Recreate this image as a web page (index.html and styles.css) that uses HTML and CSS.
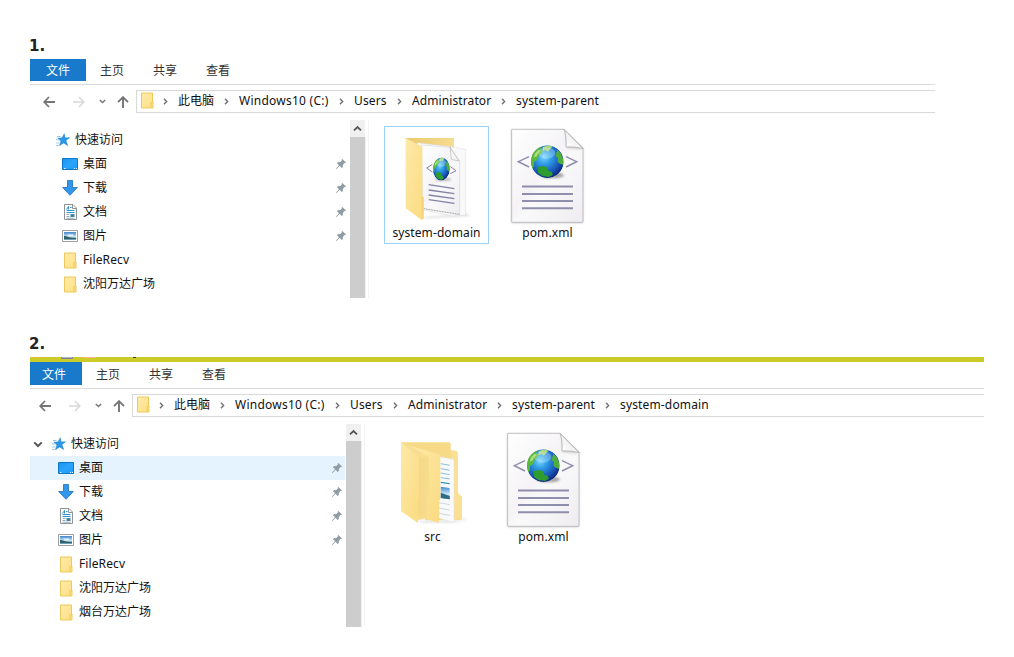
FILE: index.html
```
<!DOCTYPE html>
<html lang="zh-CN">
<head>
<meta charset="utf-8">
<title>system-parent</title>
<link rel="stylesheet" href="styles.css">
</head>
<body>
<svg class="defs" width="0" height="0">
  <defs>
    <linearGradient id="gFold" x1="0" y1="0" x2="1" y2="1"><stop offset="0" stop-color="#ffeaa8"/><stop offset="1" stop-color="#ffe085"/></linearGradient>
    <linearGradient id="gFlap" x1="0" y1="0" x2="1" y2="1"><stop offset="0" stop-color="#fde9a8"/><stop offset="1" stop-color="#fbdb80"/></linearGradient>
    <linearGradient id="gFlapShade" x1="0" y1="0" x2="1" y2="0"><stop offset="0" stop-color="#f3d47e"/><stop offset="1" stop-color="#f8dd90"/></linearGradient>
    <linearGradient id="gBack" x1="0" y1="0" x2="1" y2="0"><stop offset="0" stop-color="#e9c96c"/><stop offset="1" stop-color="#f7dd92"/></linearGradient>
    <linearGradient id="gPage" x1="0" y1="0" x2="1" y2="1"><stop offset="0" stop-color="#fff"/><stop offset=".45" stop-color="#f5f3f6"/><stop offset=".55" stop-color="#faf9fa"/><stop offset="1" stop-color="#eeecf0"/></linearGradient>
    <linearGradient id="gCurl" x1="0" y1="1" x2="1" y2="0"><stop offset="0" stop-color="#fff"/><stop offset=".5" stop-color="#f2f2f2"/><stop offset="1" stop-color="#c4c4c4"/></linearGradient>
    <radialGradient id="gSea" cx=".4" cy=".36" r=".65"><stop offset="0" stop-color="#79d4fa"/><stop offset=".35" stop-color="#2e9be6"/><stop offset=".75" stop-color="#1858b8"/><stop offset="1" stop-color="#0d2a80"/></radialGradient>
    <linearGradient id="gSky" x1="0" y1="0" x2="0" y2="1"><stop offset="0" stop-color="#3f86cf"/><stop offset=".6" stop-color="#cfe8f8"/><stop offset="1" stop-color="#5d92a8"/></linearGradient>
    <linearGradient id="gDesk" x1="0" y1="0" x2="1" y2="1"><stop offset="0" stop-color="#1593f0"/><stop offset=".5" stop-color="#2ba4fa"/><stop offset="1" stop-color="#1c9cf8"/></linearGradient>
    <clipPath id="cGlobe"><circle cx="0" cy="0" r="49"/></clipPath>
    <filter id="soft" x="-30%" y="-50%" width="160%" height="200%"><feGaussianBlur stdDeviation="3"/></filter>
  </defs>

  <symbol id="i-back" viewBox="0 0 12 12"><path d="M6 1L1.2 6 6 11M1.5 6H12" fill="none" stroke="currentColor" stroke-width="1.8"/></symbol>
  <symbol id="i-fwd" viewBox="0 0 12 12"><path d="M6 1l4.800 5L6 11M10.500 6H0" fill="none" stroke="currentColor" stroke-width="1.6"/></symbol>
  <symbol id="i-up" viewBox="0 0 12 12"><path d="M1 6.200L6 1.200l5 5M6 1.500V12" fill="none" stroke="currentColor" stroke-width="1.9"/></symbol>
  <symbol id="i-down" viewBox="0 0 7 5"><path d="M.8 1l2.700 2.600L6.200 1" fill="none" stroke="currentColor" stroke-width="1.4"/></symbol>
  <symbol id="i-right" viewBox="0 0 5 7"><path d="M1 .8l2.600 2.700L1 6.200" fill="none" stroke="currentColor" stroke-width="1.4"/></symbol>

  <symbol id="i-folder" viewBox="0 0 14 17"><path d="M1.500 1h11v9h.5v6h-11.500z" fill="url(#gFold)" stroke="#ecc95a"/><path d="M11 15.500V10.500h2" fill="none" stroke="#ecc95a"/></symbol>
  <symbol id="i-star" viewBox="0 0 14 14"><path d="M8.300 .8l.7 4.100 4.500-.2-3.600 2.900 1.800 4.900-4-2.600-4.200 2.700 1.500-4.500L1.800 5.200l4.200-.3z" fill="#2899e8" stroke="#1679c9" stroke-width=".5"/><path d="M1 3.500h3.500M0 6.800h3.500M.3 10h3M0 12.500h2.500" stroke="#8ac5ef" stroke-width=".9"/></symbol>
  <symbol id="i-desktop" viewBox="0 0 16 12"><path d="M.5.500h15v11H.5z" fill="url(#gDesk)" stroke="#0c78cc"/><path d="M2 10.500h1.500M12 10.500h1M14 10.500h1" stroke="#e8f6ff" stroke-width="1"/></symbol>
  <symbol id="i-download" viewBox="0 0 16 16"><path d="M5.500.500h5v7h4.800L8 15.300.7 7.500h4.800z" fill="#3296ea" stroke="#2678c4" stroke-width=".9"/></symbol>
  <symbol id="i-doc" viewBox="0 0 13 16"><path d="M.5.500h8.500l3.500 3.500v11.500H.5z" fill="#fff" stroke="#8f9296"/><path d="M8.500 .5V4.500h4" fill="none" stroke="#8f9296"/><path d="M2.500 5.500L4.500 2.500v3M6 3.500h1.500M2.500 6.500h8M2.500 8.500h8" fill="none" stroke="#2a94cc"/><path d="M2.500 10.500h3M2.500 12.500h3M2.500 14.200h8" stroke="#8fa3b0" stroke-width=".9"/><path d="M6.500 10h4v3h-4z" fill="#3f86a0"/></symbol>
  <symbol id="i-pic" viewBox="0 0 16 12"><path d="M.5.500h15v11H.5z" fill="#fff" stroke="#a0a0a0"/><path d="M2 2h12v8H2z" fill="url(#gSky)"/><path d="M2 6c3 0 5 2 12 1.800V9H2z" fill="#315f68"/><path d="M5 4.500h6v1.500H7z" fill="#e6f5fb"/></symbol>
  <symbol id="i-pin" viewBox="0 0 10 10"><path d="M6.300 0L10 3.600l-1 .7-.6-.2-1.600 1.800.1 2-1.100 1L3.600 6.800.6 10 0 9.400l3-3.100L1 4.200l1-1.100 2 .1 1.900-1.700-.3-.8z" fill="#8f9ca3"/></symbol>

  <symbol id="globe" viewBox="-52 -52 104 104"><g clip-path="url(#cGlobe)"><circle r="49" fill="url(#gSea)"/><path d="M-49 6c-3-20 3-36 16-46l14-6-2 10 8 2-3 9-10 8-5 12-9 6-1 14-5 6z" fill="#58b93b"/><path d="M-14-44l18-5 12 4-8 7-6 8-8-5-8 4z" fill="#a5d57a"/><path d="M30-36l10 10 8 18-1 17-9-3-8-6 2-10-7-6 2-10z" fill="#4fae3b"/><path d="M-29 16l15-3 13 4 4 10 11 4 2 9-12 6-20-4-12-9z" fill="#2f9c30"/><path d="M-38-24l12-12 4 3-7 10-2 7-9 4z" fill="#b0dd74"/><ellipse cx="-2" cy="-26" rx="26" ry="17" fill="#e8fcff" opacity=".28"/></g></symbol>

  <symbol id="big-xml" viewBox="30 21 225 294">
    <path d="M34 30h157l58 55v224H34z" fill="#888" opacity=".5" filter="url(#soft)"/>
    <path d="M35 28h157l57 56v221q0 2-2 2H37q-2 0-2-2z" fill="url(#gPage)" stroke="#b8b8bc" stroke-width="2.500"/>
    <path d="M196 38l4 47 46 4z" fill="#999" opacity=".4" filter="url(#soft)"/>
    <path d="M192 28q8 20 6 53 28-2 51 5z" fill="url(#gCurl)" stroke="#b0b0b0" stroke-width="2.500"/>
    <path d="M87 110l-32 15 32 16M198 110l32 15-32 16" fill="none" stroke="#8f8eac" stroke-width="4.500"/>
    <ellipse cx="157" cy="166" rx="35" ry="9" fill="#555" opacity=".5" filter="url(#soft)"/>
    <use href="#globe" x="90" y="73" width="104" height="104"/>
    <path d="M66 199.500h153M66 222h153M66 243h153M66 264.500h153" stroke="#8f8eac" stroke-width="6"/>
  </symbol>

  <symbol id="big-folder-xml" viewBox="57 21 225 294">
    <path d="M125 292l132-12 16 8-130 7z" fill="#999" opacity=".3" filter="url(#soft)"/>
    <path d="M77 54h145v190H110z" fill="url(#gBack)"/>
    <path d="M112 68l102 12 43 8v198l-40 2-105-22z" fill="#f9f9fa" stroke="#d6d6d8" stroke-width="1.500"/>
    <path d="M124 75l86 7 29 40v163l-110-20z" fill="url(#gPage)" stroke="#cecece" stroke-width="1.500"/>
    <path d="M130 266l110 17" fill="none" stroke="#888" stroke-width="2" stroke-dasharray="5 3"/>
    <path d="M210 81l4 37 23 5z" fill="url(#gCurl)" stroke="#b4b4b4" stroke-width="2"/>
    <path d="M157 133l-17 11 17 12M211 140l17 12-17 9" fill="none" stroke="#8382a4" stroke-width="3"/>
    <ellipse cx="190" cy="178" rx="24" ry="5" fill="#555" opacity=".4" filter="url(#soft)"/>
    <g transform="translate(184 147) rotate(3) scale(.52 .71)"><use href="#globe" x="-52" y="-52" width="104" height="104"/></g>
    <path d="M146 194l77 12M146 210l77 11M146 225l77 11M146 239l77 11" stroke="#8382a4" stroke-width="4"/>
    <path d="M77 54l50 26v148l4 5v62l-6 5-48-35z" fill="url(#gFlap)"/>
    <path d="M127 228l4 5v62l-6 5v-68z" fill="#f4d37a"/>
  </symbol>

  <symbol id="big-folder-src" viewBox="30 3 225 294">
    <path d="M100 270h130l12-8v8l-40 8H110z" fill="#999" opacity=".25" filter="url(#soft)"/>
    <path d="M48 37h143q6 0 6 6v18l14 1q7 1 7 8v119l13 12v67l-6 2H100z" fill="#f6da88"/>
    <path d="M198 61l12 1q8 1 8 8v120l13 11v66l-26 2z" fill="#fbe093"/>
    <path d="M162 80l45 8v190l-45-13z" fill="#f8f9fa" stroke="#dcdcdc" stroke-width="1.500"/>
    <path d="M167 101l27 5M167 116l27 5M167 129l27 5M167 143l27 4" stroke="#88c1de" stroke-width="3"/>
    <path d="M167 157l27 4" stroke="#3294c6" stroke-width="4"/>
    <path d="M167 170l27 4v34l-27-4z" fill="url(#gSky)"/>
    <path d="M167 188l27 10v10l-27-4z" fill="#2b6d86"/>
    <path d="M162 218l32 6M162 234l32 6M162 250l32 6" stroke="#d0d4d8" stroke-width="3"/>
    <path d="M98 271l22-6v9l-22 4z" fill="#f5f5f5"/>
    <path d="M76 47l90 27v133l-5 6v66l-64-21z" fill="url(#gFlap)"/>
    <path d="M76 47l56 36v116l-6 8v58l-29-7z" fill="url(#gFlapShade)"/>
    <path d="M48 37l54 44v122l-3 8v68l-51-35z" fill="url(#gFlap)"/>
    <path d="M48 37l28 10 56 36-30-2z" fill="#f9dd90"/>
  </symbol>
</svg>

<main class="page">
  <h2 class="step">1.</h2>
  <section class="explorer explorer-parent">
    <div class="window">
      <nav class="ribbon"><span class="tab file">文件</span><span class="tab">主页</span><span class="tab">共享</span><span class="tab">查看</span></nav>
      <div class="toolbar">
        <div class="nav">
          <svg class="back"><use href="#i-back"/></svg><svg class="fwd"><use href="#i-fwd"/></svg><svg class="recent"><use href="#i-down"/></svg><svg class="up"><use href="#i-up"/></svg>
        </div>
        <div class="address">
          <span class="crumb root"><svg class="folder"><use href="#i-folder"/></svg><svg class="sep"><use href="#i-right"/></svg></span>
          <span class="crumb pc">此电脑<svg class="sep"><use href="#i-right"/></svg></span>
          <span class="crumb drive">Windows10 (C:)<svg class="sep"><use href="#i-right"/></svg></span>
          <span class="crumb users">Users<svg class="sep"><use href="#i-right"/></svg></span>
          <span class="crumb admin">Administrator<svg class="sep"><use href="#i-right"/></svg></span>
          <span class="crumb parent">system-parent</span>
        </div>
      </div>
      <div class="content">
        <aside class="tree">
          <div class="row quick"><svg class="star"><use href="#i-star"/></svg>快速访问</div>
          <div class="row"><span class="ico"><svg class="wide"><use href="#i-desktop"/></svg></span>桌面<svg class="pin"><use href="#i-pin"/></svg></div>
          <div class="row"><span class="ico"><svg class="square"><use href="#i-download"/></svg></span>下载<svg class="pin"><use href="#i-pin"/></svg></div>
          <div class="row"><span class="ico"><svg class="tall"><use href="#i-doc"/></svg></span>文档<svg class="pin"><use href="#i-pin"/></svg></div>
          <div class="row"><span class="ico"><svg class="wide"><use href="#i-pic"/></svg></span>图片<svg class="pin"><use href="#i-pin"/></svg></div>
          <div class="row latin"><span class="ico"><svg class="folder"><use href="#i-folder"/></svg></span>FileRecv</div>
          <div class="row"><span class="ico"><svg class="folder"><use href="#i-folder"/></svg></span>沈阳万达广场</div>
        </aside>
        <div class="scroll"><div class="arrow"><svg><use href="#i-down"/></svg></div><div class="thumb"></div></div>
        <div class="files">
          <figure class="tile selected"><svg><use href="#big-folder-xml"/></svg><figcaption>system-domain</figcaption></figure>
          <figure class="tile"><svg><use href="#big-xml"/></svg><figcaption>pom.xml</figcaption></figure>
        </div>
      </div>
    </div>
  </section>

  <h2 class="step">2.</h2>
  <section class="explorer explorer-domain">
    <svg class="strip" viewBox="0 0 954 5"><path d="M0 0h954v5H0z" fill="#cccc29"/><path d="M0 0h11v.6H0z" fill="#f0b04c"/><path d="M31.500 0h11v1.500h-11z" fill="#e9e9f4" stroke="#7f7f9c"/><path d="M53 0h13v1H53z" fill="#f6b58a"/><path d="M103 0h3v1h-3z" fill="#333"/></svg>
    <div class="window">
      <nav class="ribbon"><span class="tab file">文件</span><span class="tab">主页</span><span class="tab">共享</span><span class="tab">查看</span></nav>
      <div class="toolbar">
        <div class="nav">
          <svg class="back"><use href="#i-back"/></svg><svg class="fwd"><use href="#i-fwd"/></svg><svg class="recent"><use href="#i-down"/></svg><svg class="up"><use href="#i-up"/></svg>
        </div>
        <div class="address">
          <span class="crumb root"><svg class="folder"><use href="#i-folder"/></svg><svg class="sep"><use href="#i-right"/></svg></span>
          <span class="crumb pc">此电脑<svg class="sep"><use href="#i-right"/></svg></span>
          <span class="crumb drive">Windows10 (C:)<svg class="sep"><use href="#i-right"/></svg></span>
          <span class="crumb users">Users<svg class="sep"><use href="#i-right"/></svg></span>
          <span class="crumb admin">Administrator<svg class="sep"><use href="#i-right"/></svg></span>
          <span class="crumb parent">system-parent<svg class="sep"><use href="#i-right"/></svg></span>
          <span class="crumb domain">system-domain</span>
        </div>
      </div>
      <div class="content">
        <aside class="tree">
          <div class="row quick"><svg class="expand"><use href="#i-down"/></svg><svg class="star"><use href="#i-star"/></svg>快速访问</div>
          <div class="row active"><span class="ico"><svg class="wide"><use href="#i-desktop"/></svg></span>桌面<svg class="pin"><use href="#i-pin"/></svg></div>
          <div class="row"><span class="ico"><svg class="square"><use href="#i-download"/></svg></span>下载<svg class="pin"><use href="#i-pin"/></svg></div>
          <div class="row"><span class="ico"><svg class="tall"><use href="#i-doc"/></svg></span>文档<svg class="pin"><use href="#i-pin"/></svg></div>
          <div class="row"><span class="ico"><svg class="wide"><use href="#i-pic"/></svg></span>图片<svg class="pin"><use href="#i-pin"/></svg></div>
          <div class="row latin"><span class="ico"><svg class="folder"><use href="#i-folder"/></svg></span>FileRecv</div>
          <div class="row"><span class="ico"><svg class="folder"><use href="#i-folder"/></svg></span>沈阳万达广场</div>
          <div class="row"><span class="ico"><svg class="folder"><use href="#i-folder"/></svg></span>烟台万达广场</div>
        </aside>
        <div class="scroll"><div class="arrow"><svg><use href="#i-down"/></svg></div><div class="thumb"></div></div>
        <div class="files">
          <figure class="tile"><svg><use href="#big-folder-src"/></svg><figcaption>src</figcaption></figure>
          <figure class="tile"><svg><use href="#big-xml"/></svg><figcaption>pom.xml</figcaption></figure>
        </div>
      </div>
    </div>
  </section>
</main>
</body>
</html>
```
FILE: styles.css
```
* { box-sizing: border-box; }
body { margin: 0; background: #fff; color: #111; font: 12px/16px "Noto Sans", "Noto Sans CJK SC", sans-serif; }
svg { display: block; flex: none; }
.defs { position: absolute; }
.page { padding: 0 30px; }
.step { margin: 0; height: 59px; padding: 36px 0 0; font: bold 15px/20px "DejaVu Sans", sans-serif; color: #222; text-indent: -1px; }
.explorer { overflow: hidden; }
.explorer-parent { width: 905px; height: 239px; }
.explorer-domain { width: 954px; height: 270px; }
.strip { width: 954px; height: 5px; }

.window { display: flex; flex-direction: column; height: 239px; }
.explorer-domain .window { height: 265px; margin-left: -4px; padding-top: 1px; }

.ribbon { display: flex; height: 26px; border-bottom: 1px solid #dadbdc; color: #333; }
.tab { width: 53px; height: 22px; padding-left: 14px; line-height: 24px; }
.tab.file { width: 56px; padding-left: 16px; background: #1979ca; color: #fff; }
.explorer-domain .file { height: 23px; margin-top: -1px; padding-top: 1px; }

.toolbar { display: flex; height: 23px; margin-top: 5px; flex: none; }
.nav { display: flex; align-items: center; width: 106px; padding-left: 13px; color: #757575; }
.back, .fwd, .up { width: 12px; height: 12px; }
.fwd { margin-left: 18px; color: #d9d9d9; }
.recent { width: 7px; height: 5px; margin-left: 14px; }
.up { margin-left: 11px; }
.address { flex: 1; display: flex; border: 1px solid #d9d9d9; border-right: 0; }
.crumb { display: flex; align-items: center; justify-content: space-between; height: 20px; white-space: nowrap; }
.sep { width: 5px; height: 7px; margin-right: 10px; color: #707070; }
.root { width: 41px; padding-left: 3px; }
.root .folder { margin-top: -2px; }
.pc { width: 61px; }
.drive { width: 115px; letter-spacing: .25px; }
.users { width: 58px; letter-spacing: .15px; }
.admin { width: 104px; letter-spacing: .1px; }
.parent { width: 108px; letter-spacing: .15px; }
.domain { letter-spacing: .15px; }
.folder { width: 14px; height: 17px; }

.content { display: flex; flex: 1; margin-top: 7px; min-height: 0; }
.tree { width: 320px; padding: 8px 1px 0 0; }
.row { display: flex; align-items: center; height: 24px; padding-left: 32px; }
.row.latin { letter-spacing: .1px; }
.row.active { background: #e5f3ff; }
.row.quick { padding-left: 27px; }
.star { width: 14px; height: 14px; margin: 0 5px 0 -1px; }
.expand { width: 10px; height: 7px; margin: 0 10px 0 -20px; color: #555; }
.ico { width: 16px; margin-right: 5px; display: flex; justify-content: center; }
.wide { width: 16px; height: 12px; }
.square { width: 16px; height: 16px; }
.tall { width: 13px; height: 16px; }
.pin { width: 10px; height: 10px; margin-left: auto; margin-right: 3px; }

.scroll { display: flex; flex-direction: column; width: 19px; padding-right: 3px; border-right: 1px solid #f3f3f3; }
.arrow { display: flex; align-items: center; justify-content: center; height: 17px; background: #f0f0f0; color: #555; flex: none; }
.arrow svg { width: 9px; height: 7px; transform: rotate(180deg); }
.thumb { flex: 1; background: #cdcdcd; border-right: 1px solid #f0f0f0; margin-right: -1px; }
.files { display: flex; gap: 6px; padding: 6px 0 0 15px; }
.tile { display: flex; flex-direction: column; align-items: center; width: 105px; height: 118px; margin: 0; border: 1px solid transparent; letter-spacing: .1px; }
.tile.selected { border-color: #99d1ff; }
.tile > svg { width: 75px; height: 98px; }
```
